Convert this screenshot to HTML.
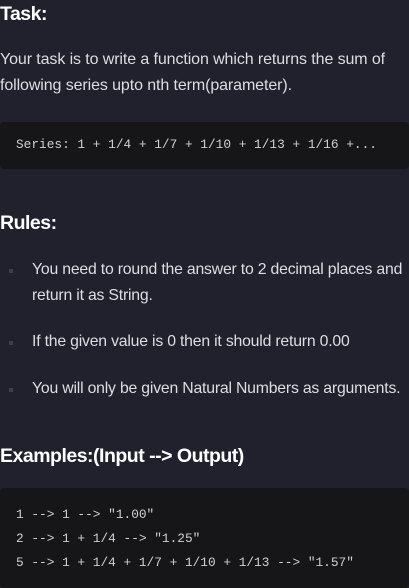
<!DOCTYPE html>
<html><head><style>
html,body{margin:0;padding:0;background:#21212d;width:409px;height:584px;overflow:hidden;color:#e8e8ea;font-family:"Liberation Sans",sans-serif}
.h{position:absolute;left:0;font-weight:bold;font-size:19.5px;color:#fff;letter-spacing:-0.5px}
.p{position:absolute;left:0;font-size:16px;line-height:26px;color:#dedee2;letter-spacing:-0.1px;white-space:nowrap}
.code{position:absolute;left:0;width:409px;background:#161618;border-radius:4px;font-family:"Liberation Mono",monospace;font-size:12.8px;color:#d0d0d0;white-space:pre}
.li{position:absolute;left:32px;font-size:15.8px;line-height:26px;color:#dedee2;white-space:nowrap;letter-spacing:-0.2px}
.dot{position:absolute;left:9px;width:4px;height:4px;background:#3e3e4a}
</style></head><body>
<div class="h" style="top:3px">Task:</div>
<div class="p" style="top:47px">Your task is to write a function which returns the sum of<br>following series upto nth term(parameter).</div>
<div class="code" style="top:122px;height:47px"><div style="position:absolute;left:16px;top:15px">Series: 1 + 1/4 + 1/7 + 1/10 + 1/13 + 1/16 +...</div></div>
<div class="h" style="top:212px">Rules:</div>
<div class="dot" style="top:269px"></div>
<div class="li" style="top:257px">You need to round the answer to 2 decimal places and<br>return it as String.</div>
<div class="dot" style="top:341px"></div>
<div class="li" style="top:329px">If the given value is 0 then it should return 0.00</div>
<div class="dot" style="top:388px"></div>
<div class="li" style="top:376px">You will only be given Natural Numbers as arguments.</div>
<div class="h" style="top:445px">Examples:(Input --&gt; Output)</div>
<div class="code" style="top:488px;height:100px"><div style="position:absolute;left:16px;top:15px;line-height:24px">1 --&gt; 1 --&gt; "1.00"
2 --&gt; 1 + 1/4 --&gt; "1.25"
5 --&gt; 1 + 1/4 + 1/7 + 1/10 + 1/13 --&gt; "1.57"</div></div>
</body></html>
